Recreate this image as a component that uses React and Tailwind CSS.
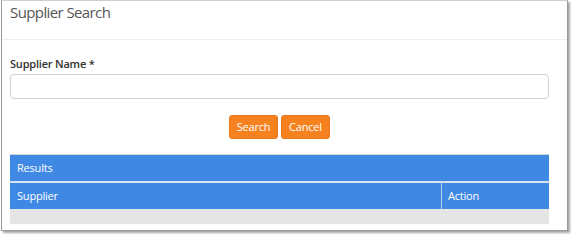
import React from 'react';

const font = { fontFamily: '"Open Sans", "Noto Sans", Arial, sans-serif' };

const SupplierSearch = () => {
  return (
    <div className="w-[574px] h-[236px] bg-white overflow-hidden" style={font}>
      <div className="ml-px w-[567px] h-[231px] bg-white border border-t-[#cfcfcf] border-[#9a9a9a] shadow-[2px_2px_2px_rgba(0,0,0,0.35)] flex flex-col">
        <div className="h-[39px] border-b border-[#efefef] pl-[8px]">
          <h1 className="text-[15px] leading-[20px] tracking-[-0.6px] text-[#555] mt-[1px]">Supplier Search</h1>
        </div>
        <div className="pl-[8px] pt-[16px] w-[547px]">
          <label className="block text-[11px] leading-[15px] font-semibold tracking-[-0.2px] text-[#333]">Supplier Name *</label>
          <input
            type="text"
            className="mt-[3px] block w-[539px] h-[25px] rounded-[4px] border border-[#d0d0d0] bg-white outline-none"
          />
          <div className="flex justify-center gap-[3px] mt-[16px]">
            <button className="w-[49px] h-[24px] rounded-[3px] bg-[#f5821f] text-white text-[11px] tracking-[-0.2px] border border-[#e8781a]">Search</button>
            <button className="w-[49px] h-[24px] rounded-[3px] bg-[#f5821f] text-white text-[11px] tracking-[-0.2px] border border-[#e8781a]">Cancel</button>
          </div>
          <div className="mt-[15px] w-[539px] border-t border-[#d6d6d6]">
            <div className="h-[28px] bg-[#3f88e4] text-white text-[11px] leading-[26px] tracking-[-0.2px] pl-[7px] border-b-2 border-[#d9e3ef]">Results</div>
            <div className="flex h-[26px] bg-[#3f88e4] text-white text-[11px] leading-[26px] tracking-[-0.2px]">
              <div className="w-[432px] pl-[7px] border-r border-[#b9cfe9]">Supplier</div>
              <div className="flex-1 pl-[6px]">Action</div>
            </div>
            <div className="h-[15px] bg-[#e5e5e5]"></div>
          </div>
        </div>
      </div>
    </div>
  );
};

export default SupplierSearch;
